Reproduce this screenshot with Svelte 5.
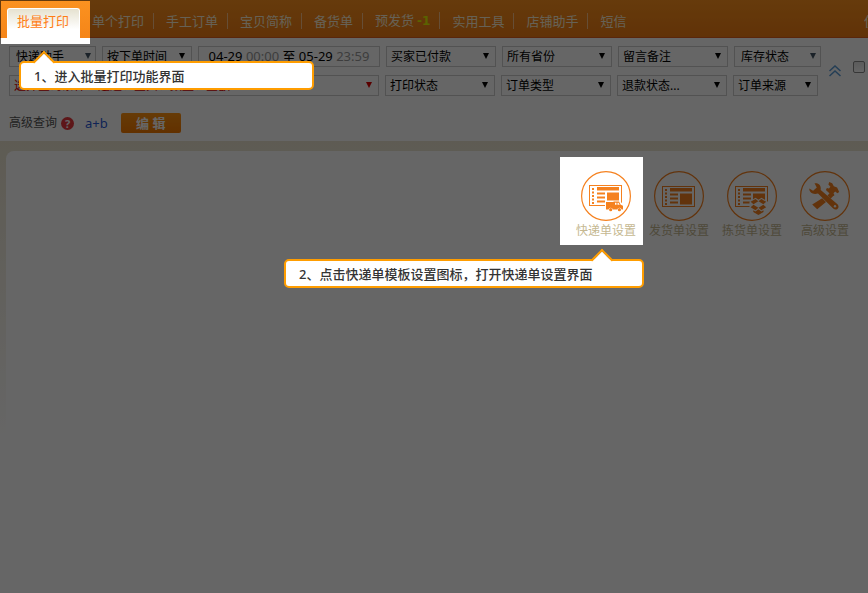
<script lang="ts">
    interface Filter {
        name: string;
        size: string;
        red?: boolean;
    }

    const menu: string[] = ["单个打印", "手工订单", "宝贝简称", "备货单", "预发货", "实用工具", "店铺助手", "短信"];

    const orderFilters: Filter[] = [
        {name: "买家已付款", size: "normal"},
        {name: "所有省份", size: "normal"},
        {name: "留言备注", size: "normal"},
        {name: "库存状态", size: "short"},
    ];

    const stateFilters: Filter[] = [
        {name: "选择查询条件：运通、宝贝、数量、金额", size: "long", red: true},
        {name: "打印状态", size: "normal"},
        {name: "订单类型", size: "normal"},
        {name: "退款状态...", size: "normal"},
        {name: "订单来源", size: "tiny"},
    ];

    const tools = [
        {name: "快递单设置", icon: "express"},
        {name: "发货单设置", icon: "delivery"},
        {name: "拣货单设置", icon: "picking"},
        {name: "高级设置", icon: "advanced"},
    ];
</script>

{#snippet dropdown(filter: Filter)}
    <label class="dropdown {filter.size}" class:red={filter.red}>
        <select aria-label={filter.name}>
            <option>{filter.name}</option>
        </select>
    </label>
{/snippet}

{#snippet form()}
    <rect x="8.5" y="15.5" width="32" height="20" fill="none" stroke="currentColor" />
    <path d="M11 18h2v2h-2zM11 21.5h2v2h-2zM11 25h2v2h-2zM11 28.5h2v2h-2zM11 32h2v2h-2z" />
    <path d="M16 17h22v3.5H16zM16 22.5h8v2h-8zM16 26.5h8v2h-8zM16 30.5h8v2h-8zM26 22.5h12v11H26z" />
{/snippet}

<div class="page">
    <header>
        <nav>
            <a class="tab" href="#batch">批量打印</a>
            {#each menu as item}
                <a class="item" href="#{item}">
                    <span>{item}{#if item === "预发货"}<b>-1</b>{/if}</span>
                </a>
            {/each}
        </nav>
        <a class="more" href="#guide">使用</a>
    </header>

    <section class="search">
        <div class="filters">
            <div class="rows">
                <div class="row">
                    {@render dropdown({name: "快递助手", size: "short"})}
                    {@render dropdown({name: "按下单时间", size: "medium"})}
                    <button class="dates">04-29 <i>00:00</i> 至 05-29 <i>23:59</i></button>
                    {#each orderFilters as filter}
                        {@render dropdown(filter)}
                    {/each}
                </div>
                <div class="row">
                    {#each stateFilters as filter}
                        {@render dropdown(filter)}
                    {/each}
                </div>
            </div>
            <button class="collapse" aria-label="收起">
                <svg width="12" height="12" viewBox="0 0 12 12" fill="none" stroke="currentColor" stroke-width="1.5">
                    <path d="M0.5 6L6 1l5.500 5M0.500 11L6 6l5.500 5" />
                </svg>
            </button>
            <input type="checkbox" aria-label="全选">
        </div>

        <div class="advanced">
            <span>高级查询</span>
            <button class="help" aria-label="帮助">?</button>
            <a href="#ab">a+b</a>
            <button class="edit">编 辑</button>
        </div>
    </section>

    <main>
        <div class="panel">
            <div class="tools">
                {#each tools as tool, i}
                    <button class="tool" class:spot={i === 0}>
                        <svg width="50" height="50" viewBox="0 0 50 50" fill="currentColor">
                            <circle cx="25" cy="25" r="24.400" fill="none" stroke="currentColor" stroke-width="1.200" />
                            {#if tool.icon === "express"}
                                <g transform="translate(0 -1)">{@render form()}</g>
                                <path d="M24 29.500h14l4 3.500v7H24z" fill="#fff" />
                                <path d="M25 31h7.500v-.5h5.500l1.700 3.300 2.300 1v3.700h-1.400a2.200 2.200 0 0 0-4.300 0h-4.500a2.200 2.200 0 0 0-4.300 0H25z" />
                                <path d="M34 31.800h1.500v2H34zM36.500 31.800h1l1.200 2h-2.200z" fill="#fff" />
                                <circle cx="29.700" cy="38.700" r="1.600" />
                                <circle cx="38.400" cy="38.700" r="1.600" />
                            {:else if tool.icon === "delivery"}
                                {@render form()}
                            {:else if tool.icon === "picking"}
                                {@render form()}
                                <path d="M22.500 30.500l6-3.700 3 2 3-2 6.500 4v9l-9.500 5-9-5z" fill="#fff" />
                                <path d="M28.500 28l2.800 2.300-4.800 2.900-2.900-2.400zM34.300 28l4.900 2.800-2.900 2.400-4.800-2.900zM26.500 33.800l4.800 3-2.800 2.500-4.900-3.100zM36.300 33.800l2.900 2.400-4.900 3.100-2.800-2.500zM26.300 39.300l2.200 1.300 2.900-2.300 2.900 2.300 2.200-1.300v1.700L31.400 44l-5.100-3z" />
                            {:else}
                                <path d="M22.200 27.200l3.800 3.800-8.800 7.200-5-4.600zM27.500 24.500l3.300-3.600 3.300 3.200-3.500 3.700z" />
                                <path d="M29.200 11l3 1.300 1.600 3 3.300 1.200 2.100 4.500-1.800 1.200-2.200-1.700-1.700 1.800 1 2-2 1-6.600-6.400 1-1.800 2.100.3 1.400-1.700-2-2.200z" />
                                <path d="M9.300 17.500l3.800 2.200 3.700-3.200-2.300-4.200c3.800-.8 7 2 6.200 6.600l16.800 14.300c3 3.500-1.200 7.200-4.300 4.300L18 22.400c-4.700 1.600-8.900-.9-8.700-4.900z" />
                                <circle cx="35" cy="35.200" r="1.200" fill="#fff" />
                            {/if}
                        </svg>
                        <span>{tool.name}</span>
                    </button>
                {/each}
                <div class="tip tip-template">2、点击快递单模板设置图标，打开快递单设置界面</div>
            </div>
        </div>
    </main>

    <div class="shade"></div>
    <div class="tip tip-print">1、进入批量打印功能界面</div>
</div>

<style>
    :global(body) {
        margin: 0;
    }

    .page {
        position: relative;
        display: flex;
        flex-direction: column;
        min-height: 100vh;
        overflow: hidden;
        background: #fff;
        color: #000;
        font-family: "Noto Sans", "Noto Sans CJK SC", sans-serif;
        font-size: 12px;
    }

    button, select {
        padding: 0;
        border: none;
        background: none;
        color: inherit;
        font: inherit;
    }

    a {
        text-decoration: none;
    }

    header {
        display: flex;
        justify-content: space-between;
        height: 38px;
        padding-left: 7px;
        background: linear-gradient(#ff931e, #f27d14);
        box-shadow: inset 0 -1px #e2601c;
        font-size: 13px;
        line-height: 16px;
    }

    nav {
        display: flex;
        align-items: flex-end;
        white-space: nowrap;
    }

    .tab {
        /* Raised over the shade together with its highlight */
        position: relative;
        z-index: 2;
        padding: 5px 11px 9px 10px;
        color: #ff7d14;
    }

    .tab::before {
        content: "";
        position: absolute;
        z-index: -2;
        inset: -7px -10px -6px -6px;
        background: linear-gradient(#fb9220, #f58518 37px, #fff 37px);
    }

    .tab::after {
        content: "";
        position: absolute;
        z-index: -1;
        inset: 0;
        border: 1px solid #fff;
        border-bottom: none;
        border-radius: 3px 3px 0 0;
        background: linear-gradient(#e6e2d0, #fff 70%);
    }

    .item {
        padding: 0 0 9px 12px;
        color: #fff3d8;
    }

    .item span {
        display: block;
        padding-right: 9px;
        border-right: 1px solid #ffc487;
    }

    .item:last-child span {
        border: none;
    }

    .item b {
        margin-left: 3px;
        color: #e4f500;
        font-family: "DejaVu Sans", sans-serif;
        font-size: 12px;
    }

    .more {
        width: 4px;
        padding-top: 13px;
        overflow: hidden;
        color: #fff3d8;
        white-space: nowrap;
    }

    .search {
        padding: 8px 3px 8px 9px;
    }

    .filters {
        display: flex;
        align-items: center;
    }

    .rows {
        display: flex;
        flex: 1;
        flex-direction: column;
        gap: 8px;
    }

    .row {
        display: flex;
        gap: 6px;
    }

    .dropdown, .dates {
        box-sizing: border-box;
        height: 21px;
        border: 1px solid #ccc;
    }

    .dropdown {
        position: relative;
        width: 110px;
    }

    .dropdown.short {
        width: 87px;
    }

    .dropdown.tiny {
        width: 85px;
    }

    .dropdown.medium {
        width: 90px;
    }

    .dropdown.long {
        width: 370px;
    }

    .dropdown::after {
        content: "";
        position: absolute;
        top: 6px;
        right: 6px;
        border: 3px solid transparent;
        border-top: 6px solid;
        border-bottom: none;
        pointer-events: none;
    }

    .dropdown.short::after {
        right: 4px;
        color: #456;
    }

    .dropdown select {
        display: block;
        width: 100%;
        height: 19px;
        padding-left: 4px;
        appearance: none;
        line-height: 19px;
    }

    .dropdown.short select {
        padding-left: 6px;
    }

    .red {
        color: #e00000;
    }

    .red::after {
        border-top-color: #e00000;
    }

    .dates {
        width: 182px;
        font-size: 13px;
        line-height: 19px;
        white-space: nowrap;
    }

    .dates i {
        color: #999;
        font-style: normal;
    }

    .collapse {
        display: flex;
        margin-right: 12px;
        color: #5b9bd5;
    }

    .filters input {
        width: 12px;
        height: 12px;
        margin: 0 0 8px;
        appearance: none;
        border: 1px solid #8a8a8a;
        border-radius: 2px;
        background: linear-gradient(#e4e4e4, #fff);
    }

    .advanced {
        display: flex;
        align-items: center;
        margin-top: 17px;
        color: #555;
        line-height: 20px;
    }

    .help {
        width: 13px;
        height: 13px;
        margin: 0 11px 0 4px;
        border-radius: 50%;
        background: #e8383d;
        color: #fff;
        font-size: 11px;
        font-weight: bold;
        line-height: 13px;
    }

    .advanced a {
        color: #2a5bd7;
        font-size: 13px;
    }

    .edit {
        width: 60px;
        height: 20px;
        margin-left: 13px;
        border-radius: 2px;
        background: linear-gradient(#ff9413, #f57a00);
        color: #fff;
        font-size: 13px;
        font-weight: bold;
        line-height: 20px;
    }

    main {
        display: flex;
        flex: 1;
        padding: 10px 0 0 6px;
        background: linear-gradient(#ebe4d0, #fff 300px);
    }

    .panel {
        flex: 1;
        border-radius: 8px 0 0 0;
        background: #fff;
    }

    .tools {
        position: relative;
        display: flex;
        justify-content: flex-end;
        gap: 13px;
        padding: 20px 13px 0 0;
    }

    .tool {
        display: flex;
        flex-direction: column;
        align-items: center;
        width: 60px;
        color: #f5811f;
        white-space: nowrap;
    }

    .tool span {
        color: #c5b891;
        line-height: 20px;
    }

    .spot {
        position: relative;
        z-index: 2;
    }

    .spot::before {
        content: "";
        position: absolute;
        z-index: -1;
        inset: -14px -7px -4px -16px;
        background: #fff;
    }

    .shade {
        position: absolute;
        z-index: 1;
        inset: 0;
        background: rgba(0, 0, 0, 0.6);
    }

    .tip {
        position: absolute;
        z-index: 3;
        box-sizing: border-box;
        height: 29px;
        padding-left: 13px;
        border: 2px solid #ff9d00;
        border-radius: 5px;
        background: #fff;
        color: #333;
        font-size: 13px;
        font-weight: 500;
        line-height: 26px;
        white-space: nowrap;
    }

    .tip::before {
        content: "";
        position: absolute;
        top: -9px;
        width: 14px;
        height: 14px;
        border: solid #ff9d00;
        border-width: 2px 0 0 2px;
        background: linear-gradient(135deg, #fff 50%, transparent 50%);
        transform: rotate(45deg);
    }

    .tip-print {
        top: 61px;
        left: 19px;
        width: 295px;
    }

    .tip-print::before {
        left: 15px;
    }

    .tip-template {
        top: 108px;
        right: 224px;
        width: 360px;
    }

    .tip-template::before {
        right: 32px;
    }
</style>
